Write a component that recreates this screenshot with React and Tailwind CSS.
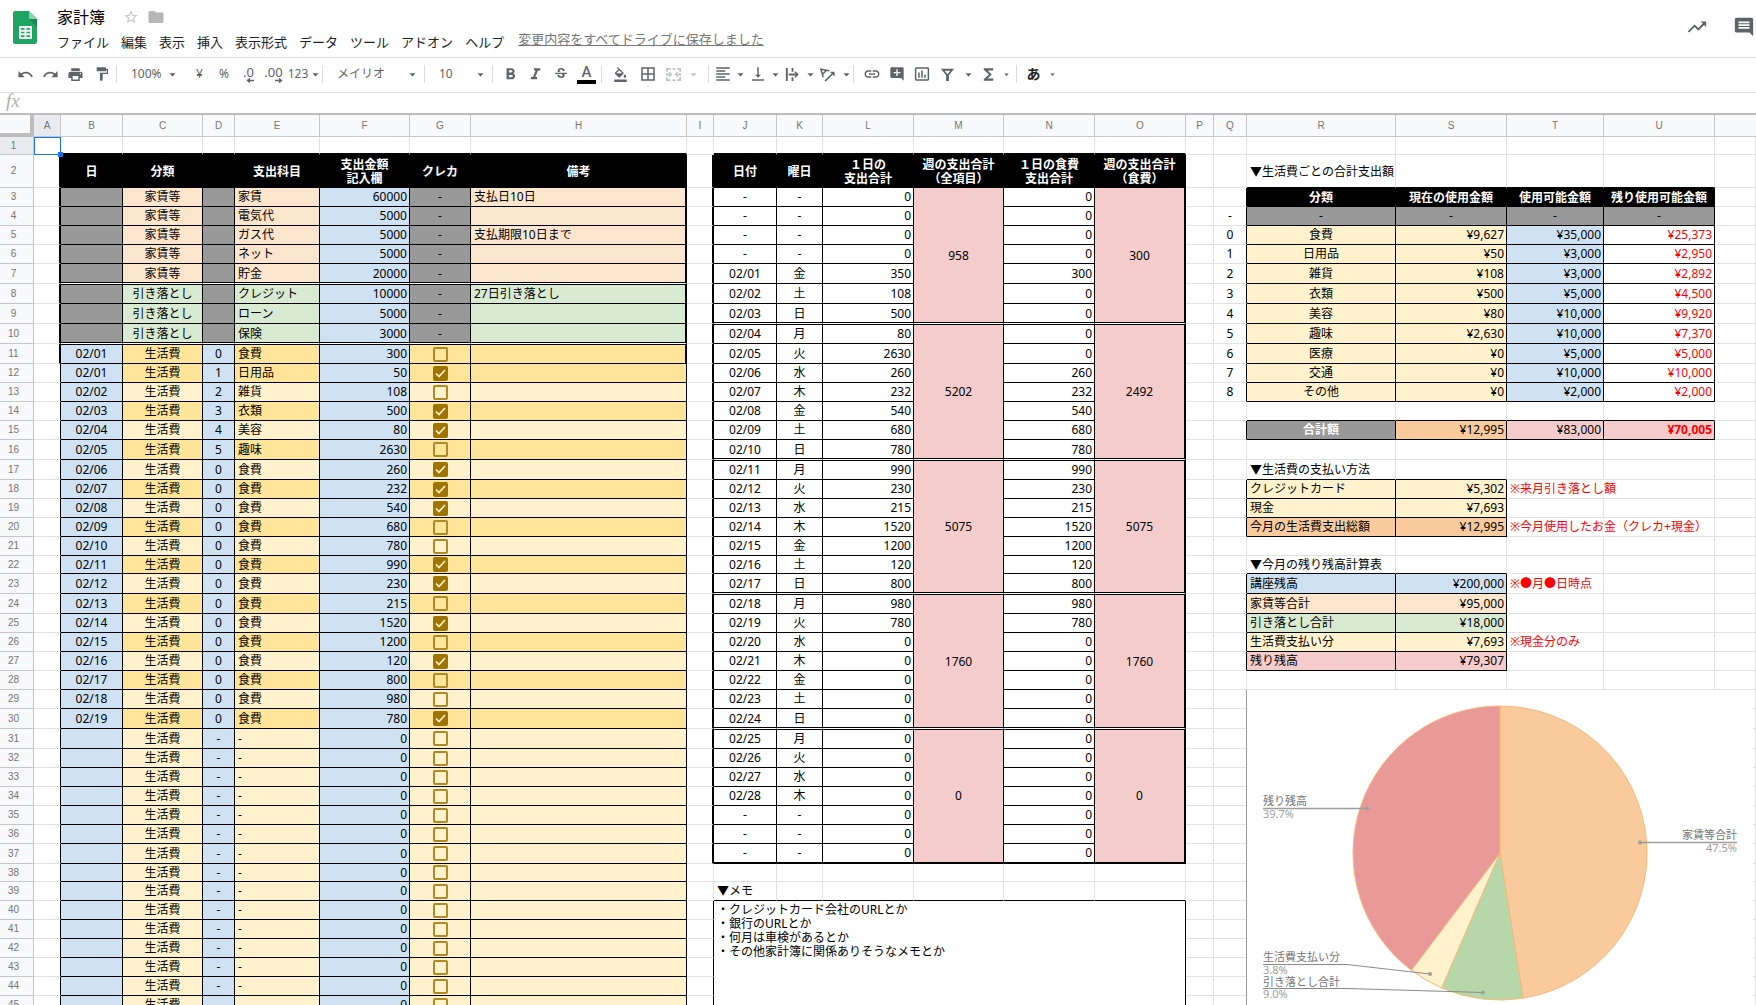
import React from "react";
import {
  MdUndo, MdRedo, MdPrint, MdFormatPaint, MdFormatBold, MdFormatItalic, MdStrikethroughS,
  MdFormatColorFill, MdBorderAll, MdFormatAlignLeft, MdVerticalAlignBottom, MdInsertLink,
  MdAddComment, MdInsertChartOutlined, MdFunctions, MdStarBorder, MdFolder, MdTrendingUp,
  MdComment, MdArrowDropDown,
} from "react-icons/md";

/* ---------- header ---------- */

const SheetsLogo = () => (
  <svg viewBox="0 0 24 33" className="block h-[33px] w-6" aria-hidden="true">
    <path d="M2 0h14l8 8v23a2 2 0 0 1-2 2H2a2 2 0 0 1-2-2V2a2 2 0 0 1 2-2z" fill="#1fa463" />
    <path d="M16 8h8v8z" fill="#188a50" />
    <path d="M16 0l8 8h-7a1 1 0 0 1-1-1z" fill="#8ed1b1" />
    <path
      d="M6 15h13v13H6zM8 17v1.700h3.500V17zM13.500 17v1.700H17V17zM8 20.700v1.600h3.500v-1.600zM13.500 20.700v1.600H17v-1.600zM8 24.300V26h3.500v-1.700zM13.500 24.300V26H17v-1.700z"
      fill="#f1f8f4"
      fillRule="evenodd"
    />
  </svg>
);

const MENUS = ["ファイル", "編集", "表示", "挿入", "表示形式", "データ", "ツール", "アドオン", "ヘルプ"];

const Header = () => (
  <header className="flex h-[58px] shrink-0 items-start border-b border-[#dadce0] pl-[13px]">
    <div className="pt-[11px]">
      <SheetsLogo />
    </div>
    <div className="ml-5 flex-1 pt-[5px]">
      <div className="flex h-6 items-center">
        <h1 className="text-base leading-6 text-black">家計簿</h1>
        <button aria-label="スターを付ける" className="ml-[18px] text-[#c4c4c4]">
          <MdStarBorder size={16} />
        </button>
        <button aria-label="移動" className="ml-2 text-[#b7b7b7]">
          <MdFolder size={18} />
        </button>
      </div>
      <div className="flex items-center">
        <nav className="flex gap-3 text-[13px] leading-[26px] text-[#202124]">
          {MENUS.map((m) => (
            <button key={m}>{m}</button>
          ))}
        </nav>
        <a href="#history" className="ml-3.5 pb-1.5 text-[13px] leading-5 text-[#777] underline">
          変更内容をすべてドライブに保存しました
        </a>
      </div>
    </div>
    <div className="flex items-center gap-[25px] pt-4 pr-px text-[#5f6368]">
      <button aria-label="アクティビティ"><MdTrendingUp size={22} /></button>
      <button aria-label="コメント履歴"><MdComment size={22} /></button>
    </div>
  </header>
);

/* ---------- toolbar ---------- */

const DecimalIcon = ({ more }) => (
  <span className="flex flex-col items-end text-[13px] leading-3">
    {more ? ".00" : ".0"}
    <svg viewBox="0 0 8 5" className="block h-[5px] w-2" aria-hidden="true">
      <path
        d={more ? "M0 2.500h6M4 .500l2.500 2-2.500 2" : "M8 2.500H2M4 .500L1.500 2.500l2.500 2"}
        fill="none"
        stroke="currentColor"
        strokeWidth="1.400"
      />
    </svg>
  </span>
);

const MergeIcon = () => (
  <svg viewBox="0 0 18 18" className="size-[17px]" fill="none" stroke="currentColor" strokeWidth="2" aria-hidden="true">
    <path d="M2 6V3h4M8 3h3M13 3h3v3M2 12v3h4M8 15h3M13 15h3v-3M1 9h5M17 9h-5" />
    <path d="M4.500 6.500L7 9l-2.500 2.500M13.500 6.500L11 9l2.500 2.500" strokeWidth="1.300" />
  </svg>
);

const WrapIcon = () => (
  <svg viewBox="0 0 18 18" className="size-[17px]" fill="none" stroke="currentColor" strokeWidth="2" aria-hidden="true">
    <path d="M3 2v14M9 2v4M9 12v4M5 9h9" />
    <path d="M11.500 6l3 3-3 3" strokeWidth="1.600" />
  </svg>
);

const RotateIcon = () => (
  <svg viewBox="0 0 18 18" className="size-[17px]" fill="none" stroke="currentColor" strokeWidth="1.600" aria-hidden="true">
    <path d="M4.500 12L2 3.500l9 1.500M4 8.500l4-4" />
    <path d="M6.500 16L15 7.500" />
    <path d="M11.500 6H16.500V11z" fill="currentColor" stroke="none" />
  </svg>
);

const FilterIcon = () => (
  <svg viewBox="0 0 18 18" className="size-[17px]" aria-hidden="true">
    <path d="M2 3h14l-5.500 6.800V16h-3V9.800zM6 5l3 3.800L12 5z" fill="currentColor" fillRule="evenodd" />
  </svg>
);

const TextColorIcon = () => (
  <span className="flex flex-col items-center">
    <span className="font-[Roboto] text-[15px] leading-[14px] font-medium">A</span>
    <span className="mt-px block h-1 w-[19px] bg-black" />
  </span>
);

const Tool = ({ label, children, className = "w-[25px]" }) => (
  <button aria-label={label} className={`flex h-7 shrink-0 items-center justify-center ${className}`}>
    {children}
  </button>
);

const Caret = ({ label, className = "w-[15px]", size = 15 }) => (
  <button aria-label={label} className={`flex h-7 shrink-0 items-center justify-center ${className}`}>
    <MdArrowDropDown size={size} className="shrink-0" />
  </button>
);

const Pick = ({ label, text, className }) => (
  <button aria-label={label} className={`flex h-7 shrink-0 items-center justify-between pr-[3px] pl-[13px] ${className}`}>
    <span>{text}</span>
    <MdArrowDropDown size={15} />
  </button>
);

const Sep = () => <span className="mx-px h-[18px] w-px shrink-0 bg-[#dadce0]" />;

const Toolbar = () => (
  <div
    role="toolbar"
    aria-label="ツールバー"
    className="flex h-[35px] shrink-0 items-center overflow-hidden border-b border-[#dadce0] pb-0.5 pl-[13px] text-xs text-[#5f6368]"
  >
    <Tool label="元に戻す"><MdUndo size={17} /></Tool>
    <Tool label="やり直し"><MdRedo size={17} /></Tool>
    <Tool label="印刷"><MdPrint size={17} /></Tool>
    <Tool label="書式の貼り付け" className="w-[27px]"><MdFormatPaint size={16} /></Tool>
    <Sep />
    <Pick label="ズーム" text="100%" className="w-[65px]" />
    <Tool label="通貨" className="ml-1 w-[25px]">¥</Tool>
    <Tool label="パーセント" className="w-[24px]">%</Tool>
    <Tool label="小数点以下の桁数を減らす"><DecimalIcon /></Tool>
    <Tool label="小数点以下の桁数を増やす"><DecimalIcon more /></Tool>
    <Tool label="表示形式の詳細設定" className="w-[35px] pl-1">123<MdArrowDropDown size={15} className="shrink-0" /></Tool>
    <Sep />
    <Pick label="フォント" text="メイリオ" className="w-[99px]" />
    <Sep />
    <Pick label="フォントサイズ" text="10" className="w-[65px]" />
    <Sep />
    <Tool label="太字" className="ml-1 w-[25px]"><MdFormatBold size={19} /></Tool>
    <Tool label="斜体"><MdFormatItalic size={19} /></Tool>
    <Tool label="取り消し線"><MdStrikethroughS size={16} /></Tool>
    <Tool label="テキストの色" className="w-[27px]"><TextColorIcon /></Tool>
    <Sep />
    <Tool label="塗りつぶしの色" className="ml-1 w-[27px]"><MdFormatColorFill size={15} /></Tool>
    <Tool label="枠線" className="w-[27px]"><MdBorderAll size={18} /></Tool>
    <span className="flex text-[#c0c2c4]">
      <Tool label="セルを結合"><MergeIcon /></Tool>
      <Caret label="結合の種類" />
    </span>
    <span className="w-1.5" />
    <Sep />
    <Tool label="水平方向の配置"><MdFormatAlignLeft size={18} /></Tool>
    <Caret label="水平方向の配置を選択" className="w-[10px]" />
    <Tool label="垂直方向の配置"><MdVerticalAlignBottom size={18} /></Tool>
    <Caret label="垂直方向の配置を選択" className="w-[10px]" />
    <Tool label="テキストを折り返す"><WrapIcon /></Tool>
    <Caret label="折り返しを選択" className="w-[10px]" />
    <Tool label="テキストの回転"><RotateIcon /></Tool>
    <Caret label="回転を選択" className="w-[12px]" />
    <Sep />
    <Tool label="リンクを挿入" className="ml-1 w-[25px]"><MdInsertLink size={18} /></Tool>
    <Tool label="コメントを挿入"><MdAddComment size={16} /></Tool>
    <Tool label="グラフを挿入"><MdInsertChartOutlined size={18} /></Tool>
    <Tool label="フィルタを作成" className="w-[27px]"><FilterIcon /></Tool>
    <Caret label="フィルタ表示" />
    <Tool label="関数"><MdFunctions size={19} /></Tool>
    <Caret label="関数を選択" className="w-[10px]" size={11} />
    <span className="w-1" />
    <Sep />
    <Tool label="入力ツール" className="ml-0.5 w-[27px] text-[14px] font-bold text-[#222]">あ</Tool>
    <Caret label="入力ツールを選択" className="w-[10px]" size={11} />
  </div>
);

const FormulaBar = () => (
  <div className="flex h-5 shrink-0 items-center pl-1.5">
    <label htmlFor="formula" className="pb-1 font-['Liberation_Serif'] text-[19px] leading-4 text-[#b0b0b0] italic">
      fx
    </label>
    <input id="formula" aria-label="数式" className="ml-3 h-5 flex-1 text-xs outline-none" />
  </div>
);

/* ---------- sheet data ---------- */

const COLS = [
  ["A", "w-[27px]"], ["B", "w-[62px]"], ["C", "w-[80px]"], ["D", "w-[32px]"], ["E", "w-[85px]"],
  ["F", "w-[90px]"], ["G", "w-[61px]"], ["H", "w-[216px]"], ["I", "w-[27px]"], ["J", "w-[63px]"],
  ["K", "w-[46px]"], ["L", "w-[91px]"], ["M", "w-[90px]"], ["N", "w-[91px]"], ["O", "w-[91px]"],
  ["P", "w-[28px]"], ["Q", "w-[33px]"], ["R", "w-[149px]"], ["S", "w-[111px]"], ["T", "w-[97px]"],
  ["U", "w-[111px]"],
];

const ROW_COUNT = 45;
const TALL = [7, 8, 9, 10, 11, 16, 17, 23, 24, 30, 31, 37];
const rowHeight = (n) => {
  if (n === 2) return "h-[33px]";
  if (n === 1 || n === 22 || n === 38) return "h-[18px]";
  return TALL.includes(n) ? "h-[20px]" : "h-[19px]";
};

const BG = {
  white: "bg-white", black: "bg-black", gray: "bg-[#999999]", peach: "bg-[#fce5cd]", green: "bg-[#d9ead3]",
  blue: "bg-[#cfe2f3]", gold: "bg-[#ffe599]", cream: "bg-[#fff2cc]", pink: "bg-[#f4cccc]", orange: "bg-[#f9cb9c]",
};
const RIGHT = {
  grid: "border-r border-r-[#e2e2e2]",
  line: "border-r border-r-black",
  thick: "border-r-2 border-r-black",
};
const BOTTOM = {
  grid: "border-b border-b-[#e2e2e2]",
  line: "border-b border-b-black",
  thick: "border-b-2 border-b-black",
  double: "border-b border-b-white shadow-[inset_0_-1px_0_#000]",
};
const ALIGN = { left: "text-left pl-[3px]", center: "text-center", right: "text-right pr-[2px]" };

const Cell = ({ bg = "white", right = "grid", bottom = "grid", top, align = "left", className = "", head, children, ...rest }) => {
  const Tag = head ? "th" : "td";
  return (
    <Tag
      className={`p-0 align-middle whitespace-nowrap ${BG[bg]} ${RIGHT[right]} ${BOTTOM[bottom]} ${ALIGN[align]} ${top ? "border-t border-t-black" : ""} ${head ? "pt-0.5 leading-[14px] font-bold text-white" : ""} ${className}`}
      {...rest}
    >
      {children}
    </Tag>
  );
};

const FIXED = [
  ["家賃等", "家賃", 60000, "支払日10日"],
  ["家賃等", "電気代", 5000, ""],
  ["家賃等", "ガス代", 5000, "支払期限10日まで"],
  ["家賃等", "ネット", 5000, ""],
  ["家賃等", "貯金", 20000, ""],
  ["引き落とし", "クレジット", 10000, "27日引き落とし"],
  ["引き落とし", "ローン", 5000, ""],
  ["引き落とし", "保険", 3000, ""],
];

const SPENT = [
  ["02/01", 0, "食費", 300, false],
  ["02/01", 1, "日用品", 50, true],
  ["02/02", 2, "雑貨", 108, false],
  ["02/03", 3, "衣類", 500, true],
  ["02/04", 4, "美容", 80, true],
  ["02/05", 5, "趣味", 2630, false],
  ["02/06", 0, "食費", 260, true],
  ["02/07", 0, "食費", 232, true],
  ["02/08", 0, "食費", 540, true],
  ["02/09", 0, "食費", 680, false],
  ["02/10", 0, "食費", 780, false],
  ["02/11", 0, "食費", 990, true],
  ["02/12", 0, "食費", 230, true],
  ["02/13", 0, "食費", 215, false],
  ["02/14", 0, "食費", 1520, true],
  ["02/15", 0, "食費", 1200, false],
  ["02/16", 0, "食費", 120, true],
  ["02/17", 0, "食費", 800, false],
  ["02/18", 0, "食費", 980, false],
  ["02/19", 0, "食費", 780, true],
];

const DAYS = [
  ["-", "-", 0, 0], ["-", "-", 0, 0], ["-", "-", 0, 0], ["-", "-", 0, 0],
  ["02/01", "金", 350, 300], ["02/02", "土", 108, 0], ["02/03", "日", 500, 0],
  ["02/04", "月", 80, 0], ["02/05", "火", 2630, 0], ["02/06", "水", 260, 260], ["02/07", "木", 232, 232],
  ["02/08", "金", 540, 540], ["02/09", "土", 680, 680], ["02/10", "日", 780, 780],
  ["02/11", "月", 990, 990], ["02/12", "火", 230, 230], ["02/13", "水", 215, 215], ["02/14", "木", 1520, 1520],
  ["02/15", "金", 1200, 1200], ["02/16", "土", 120, 120], ["02/17", "日", 800, 800],
  ["02/18", "月", 980, 980], ["02/19", "火", 780, 780], ["02/20", "水", 0, 0], ["02/21", "木", 0, 0],
  ["02/22", "金", 0, 0], ["02/23", "土", 0, 0], ["02/24", "日", 0, 0],
  ["02/25", "月", 0, 0], ["02/26", "火", 0, 0], ["02/27", "水", 0, 0], ["02/28", "木", 0, 0],
  ["-", "-", 0, 0], ["-", "-", 0, 0], ["-", "-", 0, 0],
];
const WEEKS = [[958, 300], [5202, 2492], [5075, 5075], [1760, 1760], [0, 0]];

const BUDGET = [
  ["食費", "¥9,627", "¥35,000", "¥25,373"],
  ["日用品", "¥50", "¥3,000", "¥2,950"],
  ["雑貨", "¥108", "¥3,000", "¥2,892"],
  ["衣類", "¥500", "¥5,000", "¥4,500"],
  ["美容", "¥80", "¥10,000", "¥9,920"],
  ["趣味", "¥2,630", "¥10,000", "¥7,370"],
  ["医療", "¥0", "¥5,000", "¥5,000"],
  ["交通", "¥0", "¥10,000", "¥10,000"],
  ["その他", "¥0", "¥2,000", "¥2,000"],
];

const BALANCE = {
  18: ["クレジットカード", "¥5,302", "cream", "※来月引き落とし額", 2],
  19: ["現金", "¥7,693", "cream"],
  20: ["今月の生活費支出総額", "¥12,995", "orange", "※今月使用したお金（クレカ+現金）", 2],
  23: ["講座残高", "¥200,000", "blue", "※●月●日時点", 1],
  24: ["家賃等合計", "¥95,000", "peach"],
  25: ["引き落とし合計", "¥18,000", "green"],
  26: ["生活費支払い分", "¥7,693", "cream", "※現金分のみ", 1],
  27: ["残り残高", "¥79,307", "pink"],
};

/* ---------- pie chart ---------- */

const SLICES = [
  [47.5, "#f9cb9c"],
  [9.0, "#b6d7a8"],
  [3.8, "#fff2cc"],
  [39.7, "#ea9999"],
];
const CX = 253;
const CY = 163;
const RADIUS = 147;
const onCircle = (pct) => {
  const a = (pct / 100) * 2 * Math.PI;
  return `${CX + RADIUS * Math.sin(a)} ${CY - RADIUS * Math.cos(a)}`;
};

const PieChart = () => {
  let sum = 0;
  const paths = SLICES.map(([pct, fill]) => {
    const from = sum;
    sum += pct;
    return <path key={fill} d={`M${CX} ${CY}L${onCircle(from)}A${RADIUS} ${RADIUS} 0 0 1 ${onCircle(sum)}Z`} fill={fill} />;
  });
  return (
    <div className="absolute top-0 -left-px z-10 border-l border-[#999] bg-white">
      <svg width="506" height="340" viewBox="0 0 506 340" role="img" aria-label="残高の内訳" className="block text-[11px]">
        <g stroke="#f6b87a" strokeWidth="1">{paths}</g>
        <g fill="none" stroke="#9e9e9e">
          <path d="M16 118.500H120M490 152.500H393" strokeWidth="1.500" />
          <path d="M16 274.500H100L183 284M16 298.500H100L236 302.500" stroke="#8a8a8a" />
        </g>
        <g fill="#9e9e9e">
          <circle cx="120" cy="118.500" r="2" />
          <circle cx="393" cy="152.500" r="2" />
          <circle cx="183" cy="284" r="2" />
          <circle cx="236" cy="302.500" r="2" />
          <text x="16" y="128">39.7%</text>
          <text x="490" y="162" textAnchor="end">47.5%</text>
          <text x="16" y="284">3.8%</text>
          <text x="16" y="308">9.0%</text>
        </g>
        <g fill="#757575">
          <text x="16" y="115">残り残高</text>
          <text x="490" y="149" textAnchor="end">家賃等合計</text>
          <text x="16" y="271">生活費支払い分</text>
          <text x="16" y="296">引き落とし合計</text>
        </g>
      </svg>
    </div>
  );
};

/* ---------- sheet ---------- */

const CreditBox = ({ row, checked }) => (
  <span className="grid place-items-center">
    <input
      type="checkbox"
      defaultChecked={checked}
      aria-label={`クレカ ${row}行目`}
      className="peer col-start-1 row-start-1 size-[15px] appearance-none rounded-[2px] border-2 border-[#b08a28] checked:border-[#a07400] checked:bg-[#a07400]"
    />
    <svg viewBox="0 0 15 15" className="pointer-events-none col-start-1 row-start-1 hidden size-[15px] peer-checked:block" aria-hidden="true">
      <path d="M3 7.500l3 3 6-6.500" fill="none" stroke="#fff2cc" strokeWidth="1.700" />
    </svg>
  </span>
);

const ledgerCells = (n) => {
  if (n === 1) return COLS.slice(1, 8).map(([c]) => <Cell key={c} bottom="thick" />);
  if (n === 2) {
    return [
      ["B", "日"], ["C", "分類"], ["D", ""], ["E", "支出科目"], ["F", <>支出金額<br />記入欄</>], ["G", "クレカ"], ["H", "備考"],
    ].map(([c, t]) => (
      <Cell key={c} head bg="black" right="line" bottom="line" align="center">{t}</Cell>
    ));
  }
  const edge = n <= 11 ? "thick" : "line";
  const lines = { right: "line", bottom: n === 7 || n === 10 ? "double" : "line", top: n === 8 || n === 11 };
  if (n <= 10) {
    const [kind, name, amount, note] = FIXED[n - 3];
    const fill = n <= 7 ? "peach" : "green";
    return [
      <Cell key="B" {...lines} bg="gray" />,
      <Cell key="C" {...lines} bg={fill} align="center">{kind}</Cell>,
      <Cell key="D" {...lines} bg="gray" />,
      <Cell key="E" {...lines} bg={fill}>{name}</Cell>,
      <Cell key="F" {...lines} bg="blue" align="right">{amount}</Cell>,
      <Cell key="G" {...lines} bg="gray" align="center">-</Cell>,
      <Cell key="H" {...lines} bg={fill} right={edge}>{note}</Cell>,
    ];
  }
  const [date, code, name, amount, card] = SPENT[n - 11] || ["", "-", "-", 0, false];
  const fill = n === 11 || (n <= 30 && n % 2 === 0) ? "gold" : "cream";
  return [
    <Cell key="B" {...lines} bg="blue" align="center">{date}</Cell>,
    <Cell key="C" {...lines} bg={fill} align="center">生活費</Cell>,
    <Cell key="D" {...lines} bg="blue" align="center">{code}</Cell>,
    <Cell key="E" {...lines} bg={fill}>{name}</Cell>,
    <Cell key="F" {...lines} bg="blue" align="right">{amount}</Cell>,
    <Cell key="G" {...lines} bg={fill} align="center"><CreditBox row={n} checked={card} /></Cell>,
    <Cell key="H" {...lines} bg={fill} right={edge} />,
  ];
};

const weeklyCells = (n) => {
  if (n === 1) return COLS.slice(9, 15).map(([c]) => <Cell key={c} bottom="thick" />);
  if (n === 2) {
    return [
      ["J", "日付"], ["K", "曜日"], ["L", <>１日の<br />支出合計</>], ["M", <>週の支出合計<br />（全項目）</>],
      ["N", <>１日の食費<br />支出合計</>], ["O", <>週の支出合計<br />（食費）</>],
    ].map(([c, t]) => (
      <Cell key={c} head bg="black" right={c === "O" ? "thick" : "line"} bottom="line" align="center">{t}</Cell>
    ));
  }
  if (n <= 37) {
    const i = n - 3;
    const [date, day, total, food] = DAYS[i];
    const first = i % 7 === 0;
    const last = i % 7 === 6;
    const top = first && i > 0;
    const lines = { right: "line", top, bottom: last ? (n === 37 ? "thick" : "double") : "line" };
    const week = { bg: "pink", align: "center", rowSpan: 7, top, bottom: n === 31 ? "thick" : "double" };
    const [all, foodSum] = WEEKS[Math.floor(i / 7)];
    return [
      <Cell key="J" {...lines} align="center">{date}</Cell>,
      <Cell key="K" {...lines} align="center">{day}</Cell>,
      <Cell key="L" {...lines} align="right">{total}</Cell>,
      first && <Cell key="M" {...week} right="line">{all}</Cell>,
      <Cell key="N" {...lines} align="right">{food}</Cell>,
      first && <Cell key="O" {...week} right="thick">{foodSum}</Cell>,
    ];
  }
  if (n === 38) return COLS.slice(9, 15).map(([c]) => <Cell key={c} />);
  if (n === 39) return COLS.slice(9, 15).map(([c]) => <Cell key={c} bottom="line">{c === "J" ? "▼メモ" : ""}</Cell>);
  if (n === 40) {
    return (
      <Cell colSpan={6} rowSpan={6} right="line" className="pt-0.5 !align-top leading-[14px]">
        ・クレジットカード会社のURLとか<br />
        ・銀行のURLとか<br />
        ・何月は車検があるとか<br />
        ・その他家計簿に関係ありそうなメモとか
      </Cell>
    );
  }
  return null;
};

const summaryCells = (n) => {
  const boxed = { right: "line", bottom: "line" };
  const blank = (bottom, upTo = 4) =>
    ["R", "S", "T", "U"].map((c, i) => <Cell key={c} bottom={i < upTo ? bottom : "grid"} />);
  if (n === 2) return [<Cell key="R" bottom="line" className="pt-0.5">▼生活費ごとの合計支出額</Cell>, ...blank("line").slice(1)];
  if (n === 3) {
    return ["分類", "現在の使用金額", "使用可能金額", "残り使用可能金額"].map((t) => (
      <Cell key={t} head bg="black" {...boxed} align="center">{t}</Cell>
    ));
  }
  if (n === 4) return ["R", "S", "T", "U"].map((c) => <Cell key={c} bg="gray" {...boxed} align="center">-</Cell>);
  if (n >= 5 && n <= 13) {
    const [name, used, limit, left] = BUDGET[n - 5];
    return [
      <Cell key="R" {...boxed} bg="cream" align="center">{name}</Cell>,
      <Cell key="S" {...boxed} bg="cream" align="right">{used}</Cell>,
      <Cell key="T" {...boxed} bg="blue" align="right">{limit}</Cell>,
      <Cell key="U" {...boxed} align="right" className="text-[#ff0000]">{left}</Cell>,
    ];
  }
  if (n === 14) return blank("line");
  if (n === 15) {
    return [
      <Cell key="R" {...boxed} bg="gray" align="center" className="font-bold text-white">合計額</Cell>,
      <Cell key="S" {...boxed} bg="orange" align="right">¥12,995</Cell>,
      <Cell key="T" {...boxed} bg="pink" align="right">¥83,000</Cell>,
      <Cell key="U" {...boxed} bg="pink" align="right" className="font-bold text-[#ff0000]">¥70,005</Cell>,
    ];
  }
  if (n === 17 || n === 22) {
    return [
      <Cell key="R" bottom="line">{n === 17 ? "▼生活費の支払い方法" : "▼今月の残り残高計算表"}</Cell>,
      ...blank("line", 2).slice(1),
    ];
  }
  if (BALANCE[n]) {
    const [name, amount, fill, note, span = 1] = BALANCE[n];
    return [
      <Cell key="R" {...boxed} bg={fill}>{name}</Cell>,
      <Cell key="S" {...boxed} bg={fill} align="right">{amount}</Cell>,
      <Cell key="T" colSpan={span} className="text-[#ff0000]">{note}</Cell>,
      span === 1 && <Cell key="U" />,
    ];
  }
  if (n === 29) return [<Cell key="R" className="relative"><PieChart /></Cell>, ...blank("grid").slice(1)];
  return blank("grid");
};

const codeOf = (n) => (n === 4 ? "-" : n >= 5 && n <= 13 ? n - 5 : "");
const hasSummaryEdge = (n) => (n >= 3 && n <= 13) || n === 15 || Boolean(BALANCE[n]);

const SheetRow = ({ n }) => (
  <tr className={rowHeight(n)}>
    <th
      scope="row"
      className={`border-r border-b border-[#c6c6c6] p-0 pr-1.5 text-center font-['Liberation_Sans'] text-[10px] font-normal text-[#757575] ${n === 1 ? "bg-[#e8eaed]" : "bg-[#f8f9fa]"}`}
    >
      {n}
    </th>
    <Cell right={n === 1 ? "grid" : n <= 11 ? "thick" : "line"} className="relative">
      {n === 1 && (
        <span className="absolute top-0 -right-px -bottom-px left-0 z-10 border border-[#1a73e8]">
          <span className="absolute -right-[3px] -bottom-[3px] size-[5px] bg-[#1a73e8]" />
        </span>
      )}
    </Cell>
    {ledgerCells(n)}
    <Cell right={n === 1 || n === 38 || n === 39 ? "grid" : n <= 37 ? "thick" : "line"} />
    {weeklyCells(n)}
    <Cell />
    <Cell align="center" right={hasSummaryEdge(n) ? "line" : "grid"}>{codeOf(n)}</Cell>
    {summaryCells(n)}
    <Cell />
  </tr>
);

const Sheet = () => (
  <main className="min-h-0 flex-1 overflow-hidden border-t-2 border-[#bdbdbd]">
    <table className="w-full table-fixed border-separate border-spacing-0 text-xs leading-4 text-black">
      <colgroup>
        <col className="w-[34px]" />
        {COLS.map(([name, width]) => <col key={name} className={width} />)}
        <col />
      </colgroup>
      <thead>
        <tr className="h-[22px]">
          <th aria-label="すべて選択" className="border-r-4 border-b-4 border-[#bdbdbd] bg-[#f8f9fa] p-0" />
          {COLS.map(([name]) => (
            <th
              key={name}
              scope="col"
              className={`border-r border-b border-[#c6c6c6] p-0 font-['Liberation_Sans'] text-[10px] font-normal text-[#757575] ${name === "A" ? "bg-[#e8eaed]" : "bg-[#f8f9fa]"}`}
            >
              {name}
            </th>
          ))}
          <th aria-label="V" className="border-b border-[#c6c6c6] bg-[#f8f9fa] p-0" />
        </tr>
      </thead>
      <tbody>
        {Array.from({ length: ROW_COUNT }, (_, i) => <SheetRow key={i} n={i + 1} />)}
      </tbody>
    </table>
  </main>
);

export default function App() {
  return (
    <div className="flex h-screen flex-col overflow-hidden bg-white font-['Noto_Sans','Noto_Sans_CJK_JP',sans-serif]">
      <Header />
      <Toolbar />
      <FormulaBar />
      <Sheet />
    </div>
  );
}
